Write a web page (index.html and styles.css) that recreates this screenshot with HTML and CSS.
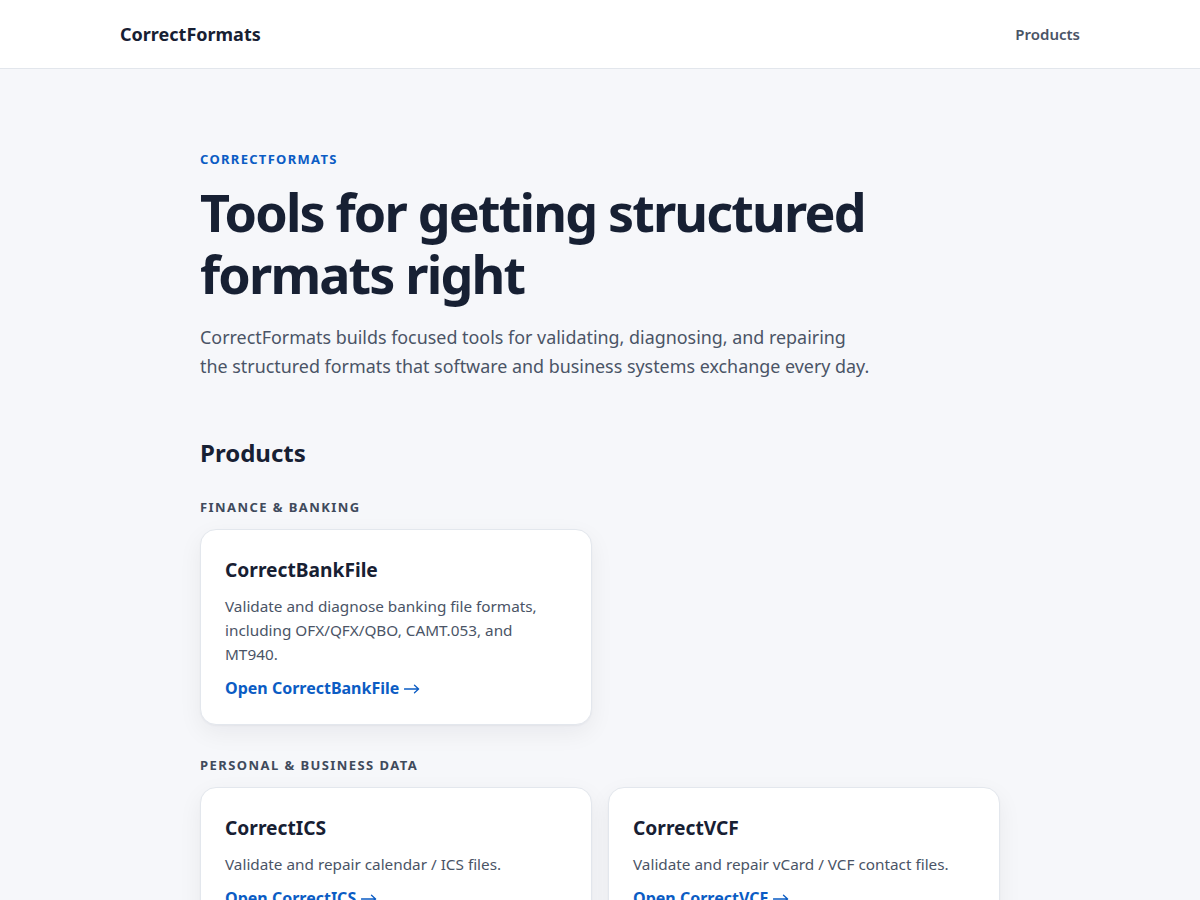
FILE: index.html
```html
<!DOCTYPE html>
<html lang="en">
<head>
<meta charset="utf-8">
<title>CorrectFormats</title>
<link rel="stylesheet" href="styles.css">
</head>
<body>
<header class="site-header">
  <div class="header-inner">
    <a class="logo" href="#">CorrectFormats</a>
    <nav class="nav"><a href="#products">Products</a></nav>
  </div>
</header>
<main class="main">
  <section class="hero">
    <p class="eyebrow">CorrectFormats</p>
    <h1 class="title">Tools for getting structured formats right</h1>
    <p class="lead">CorrectFormats builds focused tools for validating, diagnosing, and repairing the structured formats that software and business systems exchange every day.</p>
  </section>
  <section class="products" id="products">
    <h2 class="section-title">Products</h2>
    <div class="group">
      <h3 class="group-label">Finance &amp; Banking</h3>
      <div class="cards">
        <article class="card">
          <h4 class="card-title">CorrectBankFile</h4>
          <p class="card-desc">Validate and diagnose banking file formats, including OFX/QFX/QBO, CAMT.053, and MT940.</p>
          <a class="card-link" href="#">Open CorrectBankFile <svg class="arrow" viewBox="0 0 16 10" width="16" height="10" aria-hidden="true"><path d="M0.5 5H14.5M10.5 1.2L14.6 5L10.5 8.8" fill="none" stroke="currentColor" stroke-width="1.3" stroke-linecap="round" stroke-linejoin="round"/></svg></a>
        </article>
      </div>
    </div>
    <div class="group">
      <h3 class="group-label">Personal &amp; Business Data</h3>
      <div class="cards">
        <article class="card">
          <h4 class="card-title">CorrectICS</h4>
          <p class="card-desc">Validate and repair calendar / ICS files.</p>
          <a class="card-link" href="#">Open CorrectICS <svg class="arrow" viewBox="0 0 16 10" width="16" height="10" aria-hidden="true"><path d="M0.5 5H14.5M10.5 1.2L14.6 5L10.5 8.8" fill="none" stroke="currentColor" stroke-width="1.3" stroke-linecap="round" stroke-linejoin="round"/></svg></a>
        </article>
        <article class="card">
          <h4 class="card-title">CorrectVCF</h4>
          <p class="card-desc">Validate and repair vCard / VCF contact files.</p>
          <a class="card-link" href="#">Open CorrectVCF <svg class="arrow" viewBox="0 0 16 10" width="16" height="10" aria-hidden="true"><path d="M0.5 5H14.5M10.5 1.2L14.6 5L10.5 8.8" fill="none" stroke="currentColor" stroke-width="1.3" stroke-linecap="round" stroke-linejoin="round"/></svg></a>
        </article>
      </div>
    </div>
  </section>
</main>
</body>
</html>
```

FILE: styles.css
```css
* { box-sizing: border-box; }
html, body { margin: 0; padding: 0; }
body {
  font-family: "Noto Sans", "Open Sans", sans-serif;
  background: #f6f7fa;
  color: #172033;
  -webkit-font-smoothing: antialiased;
}
a { text-decoration: none; }
.site-header {
  background: #ffffff;
  border-bottom: 1px solid #e2e6ec;
}
.header-inner {
  width: 960px;
  margin: 0 auto;
  height: 68px;
  display: flex;
  align-items: center;
  justify-content: space-between;
}
.logo {
  font-size: 18px;
  font-weight: 700;
  color: #172033;
}
.nav a {
  font-size: 15px;
  font-weight: 600;
  color: #4a5466;
}
.main {
  width: 800px;
  margin: 0 auto;
  padding: 80px 0 60px;
}
.eyebrow {
  margin: 0 0 12px;
  font-size: 13px;
  line-height: 20px;
  font-weight: 700;
  letter-spacing: 0.1em;
  text-transform: uppercase;
  color: #0b5cc4;
}
.title {
  margin: 0;
  max-width: 720px;
  font-size: 52px;
  line-height: 62px;
  font-weight: 700;
  letter-spacing: -0.035em;
  color: #172033;
}
.lead {
  margin: 18px 0 0;
  max-width: 678px;
  font-size: 17.9px;
  line-height: 29px;
  color: #4a5466;
}
.products { margin-top: 56px; }
.section-title {
  margin: 0;
  font-size: 24px;
  line-height: 32px;
  font-weight: 700;
  color: #172033;
}
.group { margin-top: 28px; }
.group + .group { margin-top: 30px; }
.group-label {
  margin: 0 0 12px;
  font-size: 13px;
  line-height: 20px;
  font-weight: 700;
  letter-spacing: 0.11em;
  text-transform: uppercase;
  color: #3f4a5c;
}
.cards {
  display: grid;
  grid-template-columns: repeat(2, 392px);
  gap: 16px;
}
.card {
  background: #ffffff;
  border: 1px solid #e3e7ed;
  border-radius: 16px;
  padding: 24px 24px 24px;
  box-shadow: 0 1px 2px rgba(15, 23, 42, 0.04), 0 8px 24px rgba(15, 23, 42, 0.06);
}
.card-title {
  margin: 0;
  font-size: 19.2px;
  line-height: 32px;
  font-weight: 700;
  color: #172033;
}
.card-desc {
  margin: 8px 0 0;
  font-size: 15.3px;
  line-height: 24px;
  color: #4a5466;
}
.card-link {
  display: inline-flex;
  align-items: center;
  gap: 5px;
  margin-top: 10px;
  font-size: 16px;
  line-height: 24px;
  font-weight: 700;
  color: #0b5cc4;
}
.arrow { display: block; margin-top: 1px; }
```
